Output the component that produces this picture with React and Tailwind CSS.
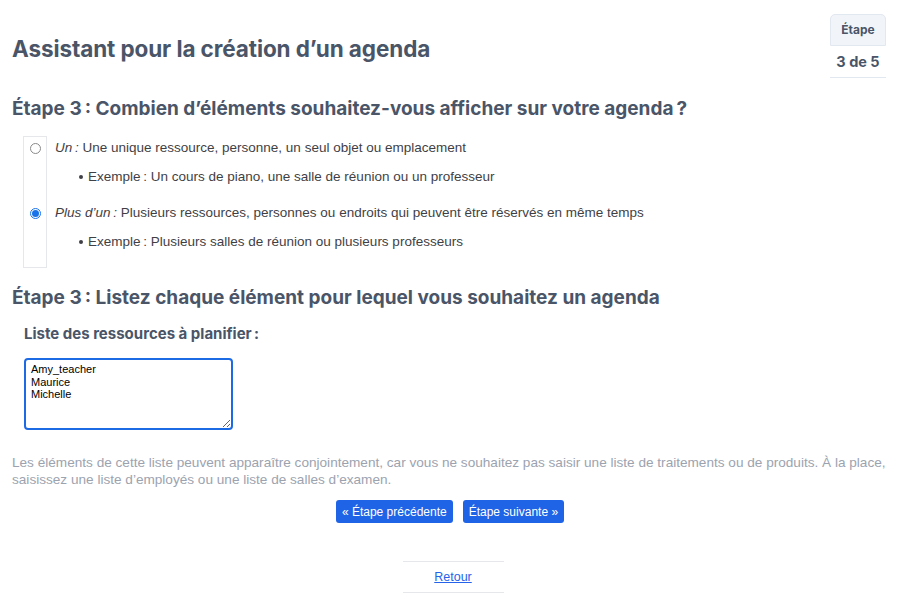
import React from "react";

export default function App() {
  const head = { fontFamily: "Inter, 'Noto Sans', sans-serif" };
  return (
    <div className="w-[900px] h-[602px] bg-white text-[#3f3f46] overflow-hidden" style={{ fontFamily: "'Liberation Sans', Arial, sans-serif" }}>
      <div className="px-3">
        <div className="flex justify-between items-start">
          <h1 className="mt-[36px] text-[22.5px] leading-[26px] font-bold text-[#4a5568] tracking-[-0.1px]" style={head}>
            Assistant pour la création d’un agenda
          </h1>
          <div className="mt-[14px] mr-[2px] w-[56px] flex flex-col items-center" style={head}>
            <div className="w-full h-[32px] rounded-t-[5px] border border-[#e2e8f0] bg-[#f1f5f9] flex items-center justify-center text-[12px] font-bold text-[#4a5568]">
              Étape
            </div>
            <div className="w-full h-[32px] border-b border-[#e2e8f0] flex items-center justify-center text-[14.5px] font-bold text-[#4a5568]">
              3 de 5
            </div>
          </div>
        </div>

        <h2 className="mt-[20px] text-[19px] leading-[22px] font-bold text-[#4a5568]" style={head}>
          Étape 3{"\u202F"}: Combien d’éléments souhaitez-vous afficher sur votre agenda{"\u202F"}?
        </h2>

        <div className="mt-[16px] ml-[11px] flex text-[13.5px] text-[#3f3f46]">
          <div className="w-[24px] h-[132px] border border-[#e5e7eb] flex flex-col items-center">
            <div className="mt-[6px] w-[11px] h-[11px] rounded-full border border-[#8a8a8a] bg-white" />
            <div className="mt-[54px] w-[11px] h-[11px] rounded-full border border-[#1a73e8] bg-white flex items-center justify-center">
              <div className="w-[7px] h-[7px] rounded-full bg-[#1a73e8]" />
            </div>
          </div>
          <div className="ml-[8px] flex flex-col">
            <div className="mt-[4px] h-[16px] leading-[16px]"><i>Un{"\u202F"}:</i> Une unique ressource, personne, un seul objet ou emplacement</div>
            <div className="mt-[13px] h-[16px] leading-[16px] ml-[24px] flex items-center">
              <span className="w-[4px] h-[4px] rounded-full bg-[#3f3f46] mr-[5px]" />
              Exemple{"\u202F"}: Un cours de piano, une salle de réunion ou un professeur
            </div>
            <div className="mt-[20px] h-[16px] leading-[16px]"><i>Plus d’un{"\u202F"}:</i> Plusieurs ressources, personnes ou endroits qui peuvent être réservés en même temps</div>
            <div className="mt-[13px] h-[16px] leading-[16px] ml-[24px] flex items-center">
              <span className="w-[4px] h-[4px] rounded-full bg-[#3f3f46] mr-[5px]" />
              Exemple{"\u202F"}: Plusieurs salles de réunion ou plusieurs professeurs
            </div>
          </div>
        </div>

        <h2 className="mt-[19px] text-[19px] leading-[22px] font-bold text-[#4a5568]" style={head}>
          Étape 3{"\u202F"}: Listez chaque élément pour lequel vous souhaitez un agenda
        </h2>

        <h3 className="mt-[16px] ml-[12px] text-[15px] leading-[18px] font-bold text-[#4a5568]" style={head}>
          Liste des ressources à planifier{"\u202F"}:
        </h3>

        <textarea
          readOnly
          className="mt-[15px] ml-[12px] block w-[209px] h-[72px] rounded-[4px] border-2 border-[#1d6ae5] px-[5px] py-[3px] text-[11px] leading-[12.5px] text-black outline-none resize"
          style={{ fontFamily: "'Liberation Sans', Arial, sans-serif" }}
          value={"Amy_teacher\nMaurice\nMichelle"}
        />

        <p className="mt-[25px] text-[13.6px] leading-[16.5px] text-[#9ca3af]">
          Les éléments de cette liste peuvent apparaître conjointement, car vous ne souhaitez pas saisir une liste de traitements ou de produits. À la place, saisissez une liste d’employés ou une liste de salles d’examen.
        </p>

        <div className="mt-[12px] flex justify-center gap-[10px] text-[12px]">
          <button className="h-[23px] px-[6px] rounded-[3px] bg-[#1f63e6] text-white">« Étape précédente</button>
          <button className="h-[23px] px-[6px] rounded-[3px] bg-[#1f63e6] text-white">Étape suivante »</button>
        </div>

        <div className="mt-[38px] ml-[6px] flex justify-center">
          <div className="w-[101px] h-[32px] border-t border-b border-[#e5e7eb] flex items-center justify-center text-[12.5px]">
            <a href="#" className="text-[#2563eb] underline">Retour</a>
          </div>
        </div>
      </div>
    </div>
  );
}
